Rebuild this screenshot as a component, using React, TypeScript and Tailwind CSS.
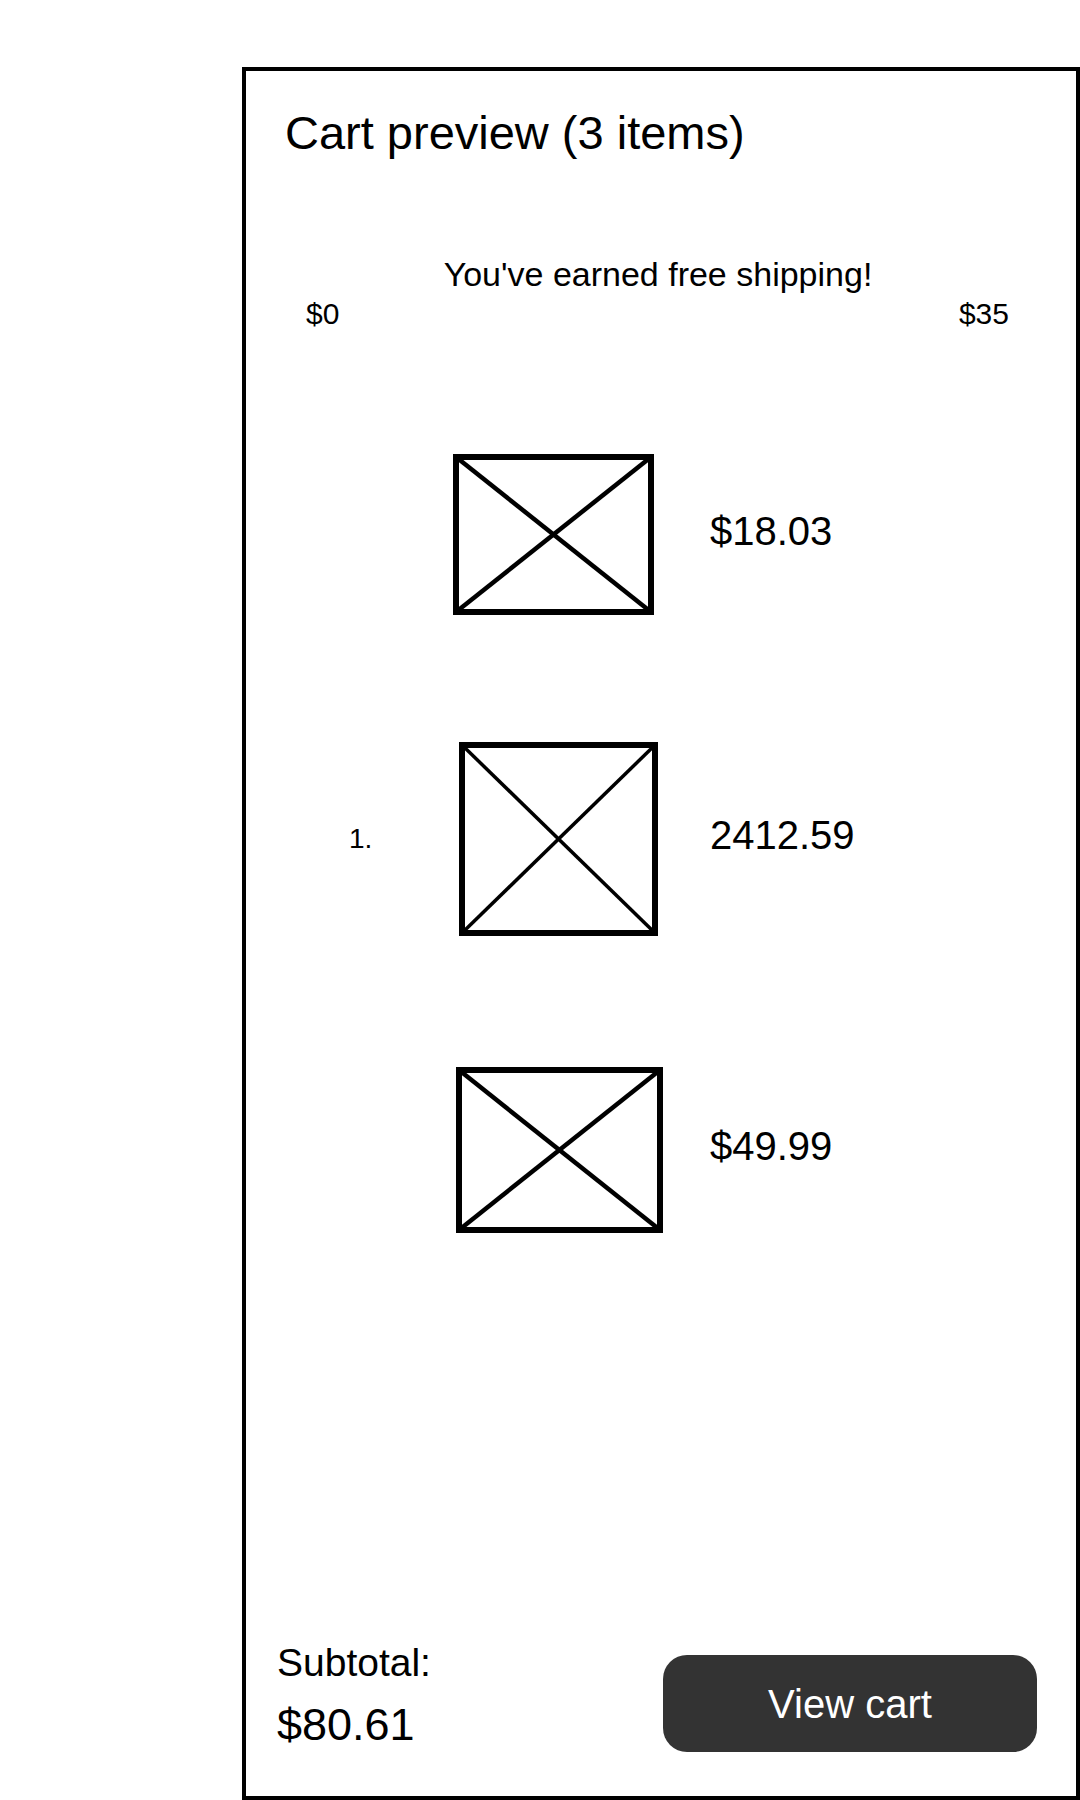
const items = [
  { num: "", price: "$18.03", w: 201, h: 161, line: 4.5, offset: "ml-0" },
  { num: "1.", price: "2412.59", w: 199, h: 194, line: 3.5, offset: "ml-[6px]" },
  { num: "", price: "$49.99", w: 207, h: 166, line: 4.5, offset: "ml-[3px]" },
];

const gaps = ["mt-[125px]", "mt-[127px]", "mt-[131px]"];

function Placeholder({ w, h, line }: { w: number; h: number; line: number }) {
  return (
    <svg width={w} height={h} viewBox={`0 0 ${w} ${h}`} className="block">
      <rect x={3} y={3} width={w - 6} height={h - 6} fill="none" stroke="#000" strokeWidth={6} />
      <line x1={3} y1={3} x2={w - 3} y2={h - 3} stroke="#000" strokeWidth={line} />
      <line x1={w - 3} y1={3} x2={3} y2={h - 3} stroke="#000" strokeWidth={line} />
    </svg>
  );
}

export default function App() {
  return (
    <div className="bg-white min-h-[1800px] pt-[67px] pl-[242px] font-['Liberation_Sans',Arial,sans-serif] text-black">
      <div className="w-[838px] h-[1733px] border-4 border-black flex flex-col">
        <h1 className="mt-[38px] pl-[39px] text-[47px] leading-none">
          Cart preview (3 items)
        </h1>

        <section className="mt-[101px]">
          <p className="text-center text-[34px] leading-none pr-[6px]">
            You've earned free shipping!
          </p>
          <div className="mt-[8px] flex justify-between pl-[60px] pr-[67px] text-[30px] leading-none">
            <span>$0</span>
            <span>$35</span>
          </div>
        </section>

        {items.map((item, i) => (
          <div key={i} className={`${gaps[i]} flex items-center pl-[103px]`}>
            <span className="w-[104px] text-[28px] leading-none">{item.num}</span>
            <div className="w-[257px]">
              <div className={item.offset}>
                <Placeholder w={item.w} h={item.h} line={item.line} />
              </div>
            </div>
            <span className="text-[40px] leading-none -mt-[8px]">{item.price}</span>
          </div>
        ))}

        <footer className="mt-auto mb-[44px] flex items-start justify-between pl-[31px] pr-[39px]">
          <div className="flex flex-col">
            <span className="text-[39px] leading-none">Subtotal:</span>
            <span className="mt-[20px] text-[45px] leading-none">$80.61</span>
          </div>
          <button className="mt-[12px] w-[374px] h-[97px] rounded-[24px] bg-[#333333] text-white text-[40px] leading-none">
            View cart
          </button>
        </footer>
      </div>
    </div>
  );
}
